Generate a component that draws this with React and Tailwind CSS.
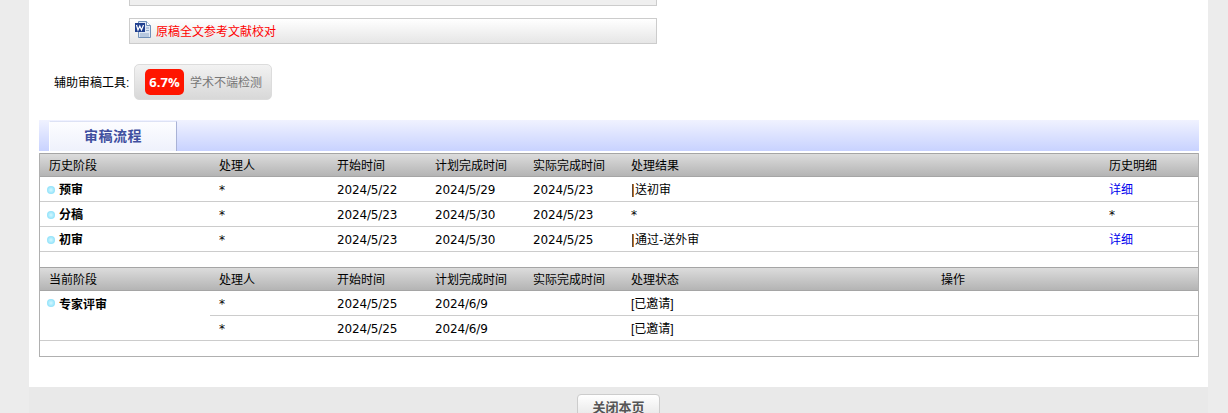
const cols = "grid grid-cols-[170px_118px_98px_98px_98px_310px_168px_1fr]";
const arial = "font-['Liberation_Sans','Noto_Sans_CJK_SC',sans-serif]";

function Dot({ top }) {
  return <span className={`absolute left-[7px] ${top} w-2 h-2 rounded-full bg-[radial-gradient(circle,#d4f8ff,#74d8f8)]`} />;
}

function Head({ items }) {
  return (
    <div className={`${cols} h-6 items-center pt-[2px] border-t border-b border-[#a5a5a5] bg-gradient-to-b from-[#dcdcdc] to-[#b4b4b4] text-black`}>
      {items.map((t, i) => (
        <div key={i} className="pl-[9px]">{t}</div>
      ))}
    </div>
  );
}

function Result({ text }) {
  return (
    <span className="flex items-center">
      <span className="w-[2px] h-[13px] ml-px mr-px bg-gradient-to-r from-[#333] to-[#f08a10]" />
      {text}
    </span>
  );
}

function Date({ children }) {
  return <div className="pl-[9px] tracking-[-0.15px]">{children}</div>;
}

function Row({ name, person, a, b, c, result, link }) {
  return (
    <div className={`${cols} h-[25px] items-center pt-[2px] border-b border-[#cccccc]`}>
      <div className="relative pl-[19px] flex items-center font-bold"><Dot top="top-[4px]" />{name}</div>
      <div className="pl-[9px]">{person}</div>
      <Date>{a}</Date>
      <Date>{b}</Date>
      <Date>{c}</Date>
      <div className="pl-[9px]">{result}</div>
      <div />
      <div className="pl-[9px]">{link}</div>
    </div>
  );
}

function Detail() {
  return <a className="text-[#0000ee]">详细</a>;
}

function WordIcon() {
  return (
    <svg width="16" height="18" viewBox="0 0 16 18" className="shrink-0">
      <path d="M3.500 .5H11.500L15.500 4.500V16.500H3.500Z" fill="#dfe8f5" stroke="#6f8fb8" />
      <path d="M11.500 .5V4.500H15.500" fill="#fff" stroke="#6f8fb8" />
      <rect x="0" y="2" width="10" height="9" fill="#1f3f8f" />
      <path d="M1.500 4L3 9L4.800 5L6.500 9L8.500 4" fill="none" stroke="#fff" strokeWidth="1.200" />
      <path d="M5 13H14M5 15H14M11 7H14M11 9.500H14" stroke="#8fa8c8" strokeWidth="1" />
    </svg>
  );
}

export default function App() {
  return (
    <div className="h-[413px] w-[1228px] overflow-hidden bg-[#ececec] text-xs text-black font-['DejaVu_Sans','Noto_Sans_CJK_SC',sans-serif]">
      <div className="ml-[29px] w-[1179px] h-[387px] bg-white">
        <div className="ml-[100px] w-[528px] h-[6px] border border-t-0 border-[#cccccc] bg-[#efefef]" />
        <div className="ml-[100px] mt-3 w-[528px] h-[26px] border border-[#cccccc] bg-gradient-to-b from-white to-[#e6e6e6] flex items-start pl-[5px] pt-[2px] gap-[5px]">
          <WordIcon />
          <a className="text-[#ff0000] leading-[20px] mt-[1px]">原稿全文参考文献校对</a>
        </div>

        <div className="mt-5 flex items-center h-[36px] pl-[25px]">
          <span className={`w-[80px] pt-[2px] whitespace-nowrap ${arial}`}>辅助审稿工具:</span>
          <div className="h-[36px] w-[138px] rounded-[5px] border border-[#dcdcdc] bg-gradient-to-b from-[#f2f2f2] to-[#d8d8d8] flex items-center pl-[10px] gap-[6px]">
            <span className="w-[39px] h-[26px] rounded-[5px] bg-[#ff1500] text-white font-bold text-center text-[13px] leading-[27px] font-['Open_Sans',sans-serif]">6.7%</span>
            <span className="pt-[2px] text-[#777]">学术不端检测</span>
          </div>
        </div>

        <div className="ml-[10px] mr-[9px] mt-5 h-[31px] bg-gradient-to-b from-[#f0f2ff] to-[#c8d2ff] pt-px pl-[10px]">
          <div className="w-[128px] h-[30px] bg-gradient-to-b from-[#fdfdff] to-[#eef1fc] border-l border-l-white border-r border-r-[#a9b2d6] border-t border-t-[#dde2f5] text-center leading-[28px] text-[14px] tracking-[0.5px] font-bold text-[#3f4f9f]">审稿流程</div>
        </div>

        <div className="ml-[10px] mr-[9px] mt-[2px] h-[204px] border-l border-r border-b border-[#b0b0b0]">
          <Head items={["历史阶段", "处理人", "开始时间", "计划完成时间", "实际完成时间", "处理结果", "", "历史明细"]} />
          <Row name="预审" person="*" a="2024/5/22" b="2024/5/29" c="2024/5/23" result={<Result text="送初审" />} link={<Detail />} />
          <Row name="分稿" person="*" a="2024/5/23" b="2024/5/30" c="2024/5/23" result="*" link="*" />
          <Row name="初审" person="*" a="2024/5/23" b="2024/5/30" c="2024/5/25" result={<Result text="通过-送外审" />} link={<Detail />} />
          <div className="h-[15px]" />
          <Head items={["当前阶段", "处理人", "开始时间", "计划完成时间", "实际完成时间", "处理状态", "操作", ""]} />
          <div className="flex border-b border-[#cccccc]">
            <div className="relative w-[170px] pl-[19px] pt-[6px] font-bold"><Dot top="top-[8px]" />专家评审</div>
            <div className="flex-1">
              <div className="grid grid-cols-[118px_98px_98px_98px_1fr] h-[25px] items-center pt-px border-b border-[#cccccc]">
                <div className="pl-[9px]">*</div>
                <Date>2024/5/25</Date>
                <Date>2024/6/9</Date>
                <div />
                <div className={`pl-[9px] ${arial}`}>[已邀请]</div>
              </div>
              <div className="grid grid-cols-[118px_98px_98px_98px_1fr] h-[24px] items-center pt-px">
                <div className="pl-[9px]">*</div>
                <Date>2024/5/25</Date>
                <Date>2024/6/9</Date>
                <div />
                <div className={`pl-[9px] ${arial}`}>[已邀请]</div>
              </div>
            </div>
          </div>
        </div>
      </div>
      <div className="h-[26px] bg-[#e9e9e9] ml-[29px] w-[1179px] pt-[7px] pl-[548px]">
        <div className="w-[83px] h-[30px] rounded-[4px] border border-[#cccccc] bg-gradient-to-b from-white to-[#e0e0e0] text-center text-[13px] leading-[26px] text-[#555] font-bold">关闭本页</div>
      </div>
    </div>
  );
}
